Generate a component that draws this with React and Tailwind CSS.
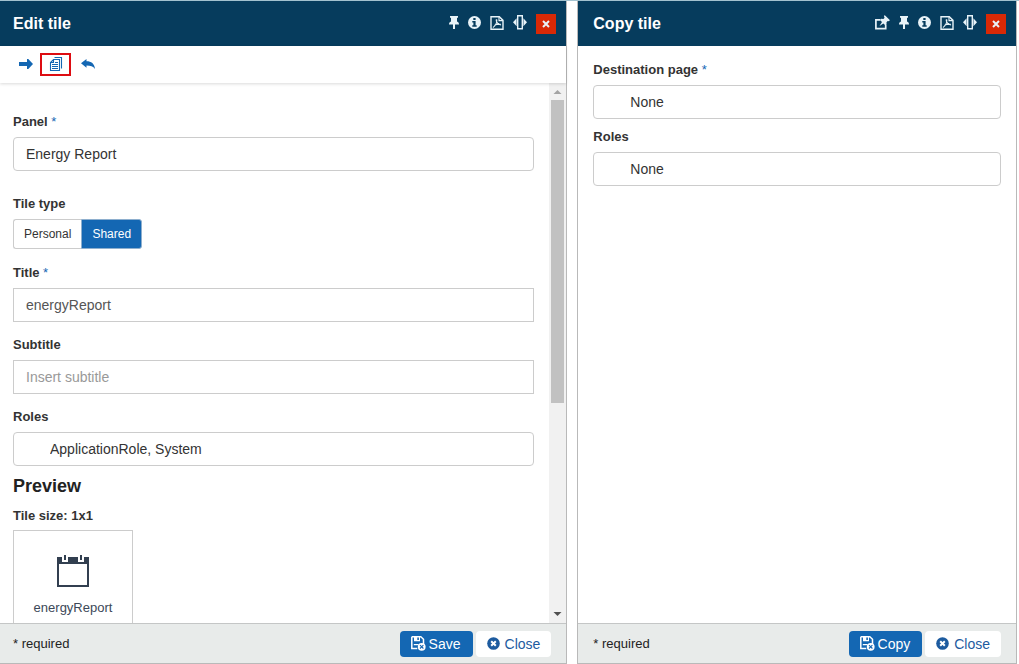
import React from "react";

const PinIcon = () => (
  <svg viewBox="0 0 10 13" className="h-[13px] w-[10px]" fill="currentColor" aria-hidden="true">
    <path d="M1 0h8v1.800H8v3.800c1.300.5 2 1.500 2 2.900H6V13H4V8.500H0c0-1.400.7-2.400 2-2.900V1.800H1z" />
  </svg>
);

const InfoIcon = () => (
  <svg viewBox="0 0 13 13" className="size-[13px]" aria-hidden="true">
    <circle cx="6.500" cy="6.500" r="6.500" fill="currentColor" />
    <path d="M5.300 1.900h2.300v2H5.300zM4.300 5h3.300v4.200h1.100v1.600H4.300V9.200h1.100V6.600H4.300z" fill="#063c5d" />
  </svg>
);

const PdfIcon = () => (
  <svg viewBox="0 0 14 14" className="size-[14px]" fill="none" stroke="currentColor" aria-hidden="true">
    <path d="M1 .7h8.300L13 4.400v8.900H1z" strokeWidth="1.400" />
    <path d="M9 .8v3.800h3.900" strokeWidth="1.100" />
    <path d="M6.400 3.300c-.7 1.900 1 5.200 4.700 5.700M6.700 3.500c.8 2.400-1 6.400-3.800 8M4.400 9.500c1.600-1.100 3.900-1.500 6.400-1.200" strokeWidth="1.100" />
  </svg>
);

const ResizeIcon = () => (
  <svg viewBox="0 0 14 15" className="h-[15px] w-[14px]" fill="currentColor" aria-hidden="true">
    <path d="M4.700.7h4.600v13H4.700z" fill="none" stroke="currentColor" strokeWidth="1.400" />
    <path d="M0 7.200 3.600 3.200v8zM14 7.200l-3.600-4v8z" />
  </svg>
);

const DetachIcon = () => (
  <svg viewBox="0 0 15 15" className="size-[15px]" aria-hidden="true">
    <path d="M5 4.800H.900v8.900h9.800V10" fill="none" stroke="currentColor" strokeWidth="1.700" />
    <path d="M9.600 0 15 5.200l-1.500 1-.8-.2-1.200 1.200.1 2.400-1.200.9-2-2L4.500 11 7 7.100 4.800 5l1.200-1.200 2.400.1 1.200-1.200L9 1.500z" fill="currentColor" />
  </svg>
);

const CrossIcon = () => (
  <svg viewBox="0 0 8 8" className="size-2" stroke="currentColor" strokeWidth="2" aria-hidden="true">
    <path d="m1 1 6 6M7 1 1 7" />
  </svg>
);

const ArrowIcon = () => (
  <svg viewBox="0 0 14 10" className="h-[10px] w-[14px]" fill="currentColor" aria-hidden="true">
    <path d="M0 3h8V0h1.300L14 5 9.300 10H8V7H0z" />
  </svg>
);

const ReplyIcon = () => (
  <svg viewBox="0 0 14 10" className="h-[10px] w-[14px]" fill="currentColor" aria-hidden="true">
    <path d="M0 4.200 5.500 0v2.300c4.800 0 8 2.300 8.500 7.700-1.800-2.600-4.400-3.500-8.500-3.500v2.300z" />
  </svg>
);

const CopiesIcon = () => (
  <svg viewBox="0 0 14 15" className="h-[15px] w-[14px]" fill="none" stroke="currentColor" aria-hidden="true">
    <path d="M4.500 2.500h6v11H1.500v-8zM4.500 2.500v3h-3" strokeWidth="1.100" />
    <path d="M5.500.5h7v11" strokeWidth="1.100" />
    <path d="M6 5.500h3M3 7.500h6M3 9.500h6M3 11.500h6" />
  </svg>
);

const SaveIcon = () => (
  <svg viewBox="0 0 15 15" className="size-[15px]" aria-hidden="true">
    <path d="M.8.800h9L12.500 3.300V8M.8.800v11.700h5.500" fill="none" stroke="currentColor" strokeWidth="1.500" />
    <path d="M3 1h6v4.300H3zM2.800 8h4.800v1.300H2.800z" fill="currentColor" />
    <path d="M6.300 1.600h1.600v2.500H6.300z" fill="#1467b3" />
    <circle cx="10.700" cy="10.800" r="3.900" fill="currentColor" />
    <path d="m9 9.100 3.400 3.400m0-3.400L9 12.500" stroke="#1467b3" strokeWidth="1.100" />
  </svg>
);

const CloseCircleIcon = () => (
  <svg viewBox="0 0 13 13" className="size-[13px]" aria-hidden="true">
    <circle cx="6.500" cy="6.500" r="6.300" fill="#1d5b9f" />
    <path d="m4.200 4.200 4.600 4.600m0-4.600L4.200 8.800" stroke="#fff" strokeWidth="2" />
  </svg>
);

const CalendarIcon = () => (
  <svg viewBox="0 0 32 32" className="size-8" aria-hidden="true">
    <path d="M1 8v23h30V8" fill="none" stroke="#323f50" strokeWidth="2" />
    <path d="M0 2h5v5h6V2h10v5h6V2h5v7H0zM7 0h2v5H7zM23 0h2v5h-2z" fill="#323f50" />
  </svg>
);

function PanelHeader({ title, detachable }) {
  return (
    <header className="flex h-[45px] shrink-0 items-center justify-between bg-[#063c5d] pr-2.5 text-[#e8f3f8]">
      <h1 className={detachable ? "pl-[15px] text-base font-bold text-white" : "pl-[13px] text-base font-bold text-white"}>
        {title}
      </h1>
      <div className="flex items-center gap-[9px]">
        {detachable && (
          <button type="button" aria-label="Open in new window" className="pb-0.5"><DetachIcon /></button>
        )}
        <button type="button" aria-label="Pin" className="pb-0.5"><PinIcon /></button>
        <button type="button" aria-label="Information" className="pb-0.5"><InfoIcon /></button>
        <button type="button" aria-label="Export to PDF" className="pb-0.5"><PdfIcon /></button>
        <button type="button" aria-label="Resize" className="pb-0.5"><ResizeIcon /></button>
        <button type="button" aria-label="Close panel" className="flex size-5 items-center justify-center bg-[#d92906]">
          <CrossIcon />
        </button>
      </div>
    </header>
  );
}

function PanelFooter({ action, wide }) {
  return (
    <footer className="flex h-10 shrink-0 items-center justify-between border-t border-[#c4c6c6] bg-[#e8ebea] pr-[15px]">
      <p className={wide ? "pl-[13px] text-[13px]" : "pl-[15px] text-[13px]"}>* required</p>
      <div className="flex gap-[3px] text-sm">
        <button type="button" className="flex h-[26px] items-center gap-[3px] rounded bg-[#1467b3] pr-3 pl-[11px] text-white">
          <SaveIcon />
          {action}
        </button>
        <button type="button" className="flex h-[26px] items-center gap-[5px] rounded bg-white px-[11px] text-[#1d5b9f]">
          <CloseCircleIcon />
          Close
        </button>
      </div>
    </footer>
  );
}

function FieldLabel({ id, children, required }) {
  return (
    <label htmlFor={id} className="mb-[5px] block text-[13px] leading-5 font-bold text-[#333]">
      {children}
      {required && <span className="font-normal text-[#1467b3]"> *</span>}
    </label>
  );
}

function SelectField({ id, label, required, value, indent }) {
  return (
    <div>
      <FieldLabel id={id} required={required}>{label}</FieldLabel>
      <select
        id={id}
        className={
          indent
            ? "block h-[34px] w-full appearance-none rounded border border-[#ccc] bg-white pl-9 text-sm text-[#333]"
            : "block h-[34px] w-full appearance-none rounded border border-[#ccc] bg-white pl-3 text-sm text-[#333]"
        }
      >
        <option>{value}</option>
      </select>
    </div>
  );
}

function TextField({ id, label, required, ...input }) {
  return (
    <div>
      <FieldLabel id={id} required={required}>{label}</FieldLabel>
      <input
        id={id}
        type="text"
        className="block h-[34px] w-full border border-[#ccc] bg-white px-3 text-sm text-[#555] placeholder:text-[#999]"
        {...input}
      />
    </div>
  );
}

function EditTile() {
  return (
    <section className="flex min-w-0 flex-[568] flex-col border-r border-b border-[#b9b9b9] bg-white">
      <PanelHeader title="Edit tile" />
      <nav className="relative flex h-[37px] shrink-0 items-center pl-[19px] text-[#1467b3] shadow-[0_1px_3px_rgba(0,0,0,0.15)]">
        <button type="button" aria-label="Next" className="pb-px"><ArrowIcon /></button>
        <button
          type="button"
          aria-label="Copy tile"
          className="mr-2.5 ml-[7px] flex h-[23px] w-[31px] items-center justify-center border-2 border-[#dd0c12]"
        >
          <CopiesIcon />
        </button>
        <button type="button" aria-label="Back" className="pb-px"><ReplyIcon /></button>
      </nav>
      <div className="flex min-h-0 flex-1">
        <main className="min-w-0 flex-1 overflow-hidden pt-[29px] pr-[15px] pl-[13px]">
          <SelectField id="panel" label="Panel" required value="Energy Report" />
          <fieldset className="mt-[23px] mb-[14px]">
            <legend className="mb-[5px] text-[13px] leading-5 font-bold text-[#333]">Tile type</legend>
            <div className="flex text-xs">
              <button type="button" aria-pressed="false" className="h-[30px] rounded-l-[3px] border border-r-0 border-[#ccc] px-2.5 text-[#333]">
                Personal
              </button>
              <button type="button" aria-pressed="true" className="h-[30px] rounded-r-[3px] border border-[#8eafce] bg-[#1467b3] px-2.5 text-white">
                Shared
              </button>
            </div>
          </fieldset>
          <div className="flex flex-col gap-[13px]">
            <TextField id="title" label="Title" required defaultValue="energyReport" />
            <TextField id="subtitle" label="Subtitle" placeholder="Insert subtitle" />
            <SelectField id="roles" label="Roles" value="ApplicationRole, System" indent />
          </div>
          <h2 className="mt-2.5 text-lg leading-5 font-bold text-[#222]">Preview</h2>
          <p className="mt-2.5 text-[13px] leading-5 font-bold text-[#333]">Tile size: 1x1</p>
          <div className="mt-1 flex h-[120px] w-[120px] flex-col items-center border border-[#ccc] pt-6 text-[13px] leading-5 text-[#3c4858]">
            <CalendarIcon />
            <span className="mt-[11px]">energyReport</span>
          </div>
        </main>
        <div className="flex w-[17px] flex-col items-center bg-[#f1f1f1]" aria-hidden="true">
          <svg viewBox="0 0 17 17" className="size-[17px]"><path d="M4.500 11h8L8.500 7z" fill="#a3a3a3" /></svg>
          <div className="flex min-h-0 w-[13px] flex-1 flex-col">
            <div className="flex-[303] bg-[#c1c1c1]" />
            <div className="flex-[203]" />
          </div>
          <svg viewBox="0 0 17 17" className="size-[17px]"><path d="M4.500 6h8l-4 4z" fill="#505050" /></svg>
        </div>
      </div>
      <PanelFooter action="Save" wide />
    </section>
  );
}

function CopyTile() {
  return (
    <section className="flex min-w-0 flex-[439] flex-col border-x border-b border-[#b9b9b9] bg-white">
      <PanelHeader title="Copy tile" detachable />
      <main className="flex min-h-0 flex-1 flex-col gap-2 px-[15px] pt-[14px]">
        <SelectField id="destination" label="Destination page" required value="None" indent />
        <SelectField id="copy-roles" label="Roles" value="None" indent />
      </main>
      <PanelFooter action="Copy" />
    </section>
  );
}

export default function App() {
  return (
    <div className="flex h-screen gap-2.5 border-t border-[#a3c2cf] bg-white pr-0.5 font-['Liberation_Sans',Arial,sans-serif] text-[#222]">
      <EditTile />
      <CopyTile />
    </div>
  );
}
